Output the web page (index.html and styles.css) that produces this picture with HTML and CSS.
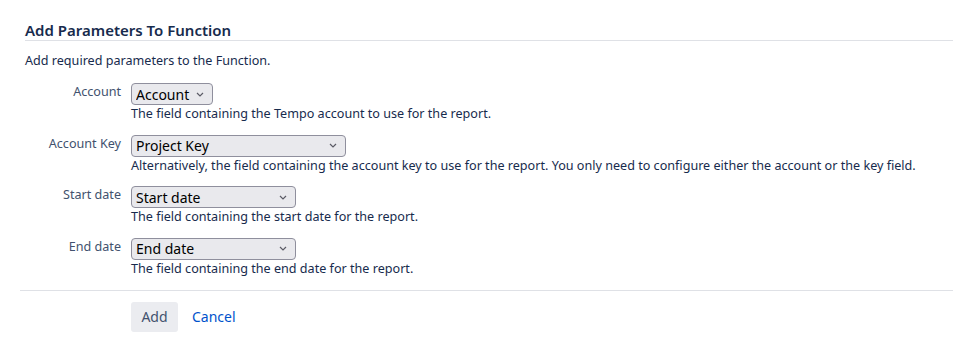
FILE: index.html
```html
<!DOCTYPE html>
<html lang="en">

<head>
    <meta charset="UTF-8">
    <meta name="viewport" content="width=device-width, initial-scale=1.0">
    <title>Add Parameters To Function</title>
    <link rel="stylesheet" href="styles.css">
</head>

<body>
    <div class="dialog">
        <h2 class="dialog-title">Add Parameters To Function</h2>
        <p class="dialog-intro">Add required parameters to the Function.</p>

        <form class="param-form">
            <div class="field-group">
                <label class="field-label" for="account">Account</label>
                <div class="field-body">
                    <select class="select select--account" id="account">
                        <option>Account</option>
                    </select>
                    <div class="description">The field containing the Tempo account to use for the report.</div>
                </div>
            </div>

            <div class="field-group">
                <label class="field-label" for="account_key">Account Key</label>
                <div class="field-body">
                    <select class="select select--key" id="account_key">
                        <option>Project Key</option>
                    </select>
                    <div class="description">Alternatively, the field containing the account key to use for the report. You only need to configure either the account or the key field.</div>
                </div>
            </div>

            <div class="field-group">
                <label class="field-label" for="start_date">Start date</label>
                <div class="field-body">
                    <select class="select select--date" id="start_date">
                        <option>Start date</option>
                    </select>
                    <div class="description">The field containing the start date for the report.</div>
                </div>
            </div>

            <div class="field-group">
                <label class="field-label" for="end_date">End date</label>
                <div class="field-body">
                    <select class="select select--date" id="end_date">
                        <option>End date</option>
                    </select>
                    <div class="description">The field containing the end date for the report.</div>
                </div>
            </div>

            <footer class="buttons">
                <button type="submit" class="btn">Add</button>
                <a href="#" class="cancel">Cancel</a>
            </footer>
        </form>
    </div>
</body>

</html>
```

FILE: styles.css
```css
* {
    box-sizing: border-box;
    margin: 0;
    padding: 0;
}

body {
    background-color: #fff;
    font-family: "Noto Sans", "Liberation Sans", sans-serif;
    color: #172b4d;
    font-size: 12.6px;
}

.dialog {
    padding: 20px 0 0 20px;
}

.dialog-title {
    margin-left: 5px;
    font-size: 15px;
    font-weight: 600;
    line-height: 20px;
    border-bottom: 1px solid #dfe1e6;
    color: #172b4d;
}

.dialog-intro {
    margin: 12px 0 0 5px;
    line-height: 16px;
}

.param-form {
    margin-top: 14px;
}

.field-group {
    display: flex;
    gap: 10px;
    margin-bottom: 12.5px;
}

.field-label {
    width: 101px;
    flex-shrink: 0;
    text-align: right;
    color: #42526e;
    padding-top: 1px;
    line-height: 16px;
}

.select {
    display: block;
    height: 22px;
    font-family: inherit;
    font-size: 14px;
    color: #000;
    background-color: #e9e9ed;
    border: 1px solid #8f8f9d;
    border-radius: 4px;
    padding: 0 20px 0 4px;
    appearance: none;
    background-image: url("data:image/svg+xml,%3Csvg xmlns='http://www.w3.org/2000/svg' width='8' height='5' viewBox='0 0 8 5'%3E%3Cpath d='M1 1l3 3 3-3' fill='none' stroke='%235b5b66' stroke-width='1.2'/%3E%3C/svg%3E");
    background-repeat: no-repeat;
    background-position: right 8px center;
}

.select--account {
    width: 82px;
}

.select--key {
    width: 215px;
}

.select--date {
    width: 165px;
}

.description {
    margin-top: 1px;
    line-height: 16px;
    color: #172b4d;
}

.buttons {
    border-top: 1px solid #dfe1e6;
    margin-top: 13px;
    padding: 11px 0 0 111px;
    display: flex;
    align-items: center;
    gap: 14px;
}

.btn {
    font-family: inherit;
    font-size: 14px;
    color: #42526e;
    background-color: #ebecf0;
    border: none;
    border-radius: 3px;
    height: 30px;
    width: 47px;
}

.cancel {
    font-size: 14px;
    color: #0052cc;
    text-decoration: none;
}
```
